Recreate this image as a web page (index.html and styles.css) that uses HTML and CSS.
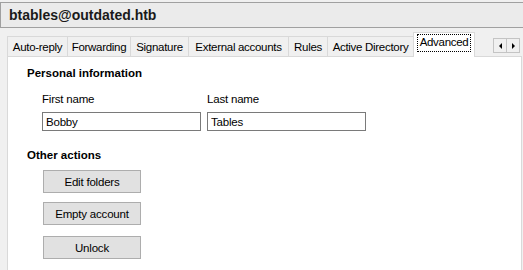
FILE: index.html
```html
<!DOCTYPE html>
<html lang="en">
<head>
  <meta charset="UTF-8" />
  <title>btables@outdated.htb</title>
  <link rel="stylesheet" href="styles.css">
</head>
<body>

  <div class="titlebar">
    <span class="account">btables@outdated.htb</span>
  </div>

  <div class="tabstrip">
    <div class="tab tab-autoreply">Auto-reply</div>
    <div class="tab tab-forwarding">Forwarding</div>
    <div class="tab tab-signature">Signature</div>
    <div class="tab tab-external">External accounts</div>
    <div class="tab tab-rules">Rules</div>
    <div class="tab tab-ad">Active Directory</div>
    <div class="tab tab-advanced active"><span class="focus">Advanced</span></div>
    <div class="tab-scroll">
      <button class="scroll-btn"><span class="arrow left"></span></button>
      <button class="scroll-btn"><span class="arrow right"></span></button>
    </div>
  </div>

  <div class="panel">
    <h2>Personal information</h2>
    <div class="fields">
      <div class="field">
        <label>First name</label>
        <input type="text" value="Bobby">
      </div>
      <div class="field">
        <label>Last name</label>
        <input type="text" value="Tables">
      </div>
    </div>

    <h2 class="other">Other actions</h2>
    <div class="actions">
      <button class="btn">Edit folders</button>
      <button class="btn">Empty account</button>
      <button class="btn btn-last">Unlock</button>
    </div>
  </div>

</body>
</html>
```

FILE: styles.css
```css
* {
  margin: 0; padding: 0; box-sizing: border-box;
  font-family: 'Liberation Sans', Arial, sans-serif;
}
body {
  background: #f0f0f0;
  color: #000;
  width: 523px;
  height: 270px;
  overflow: hidden;
}
.titlebar {
  margin-top: 2px;
  height: 26px;
  background: #ebebeb;
  border-top: 1px solid #a0a0a0;
  border-bottom: 1px solid #a0a0a0;
  border-left: 1px solid #a0a0a0;
  padding-left: 8px;
  display: flex;
  align-items: center;
}
.account {
  font-size: 14px;
  font-weight: bold;
  color: #1a1a1a;
}
.tabstrip {
  display: flex;
  align-items: flex-end;
  height: 28px;
  padding-left: 7px;
}
.tab {
  height: 20px;
  border: 1px solid #d9d9d9;
  border-bottom: none;
  margin-right: -1px;
  background: #f0f0f0;
  font-size: 11.5px;
  letter-spacing: -0.3px;
  display: flex;
  align-items: center;
  justify-content: center;
  white-space: nowrap;
}
.tab-autoreply { width: 61px; }
.tab-forwarding { width: 64px; }
.tab-signature { width: 59px; }
.tab-external { width: 101px; }
.tab-rules { width: 40px; }
.tab-ad { width: 87px; }
.tab-advanced { width: 62px; }
.tab.active {
  height: 25px;
  background: #fff;
  margin-bottom: -1px;
  position: relative;
  z-index: 1;
  padding-bottom: 4px;
}
.focus {
  border: 1px dotted #000;
  padding: 1px 2px 2px;
  line-height: 13px;
}
.tab-scroll {
  display: flex;
  margin-left: auto;
  margin-right: 3px;
  align-self: flex-start;
  margin-top: 10px;
}
.scroll-btn {
  width: 14px;
  height: 15px;
  border: 1px solid #c4c4c4;
  background: #f0f0f0;
  display: flex;
  align-items: center;
  justify-content: center;
  margin-left: -1px;
}
.arrow {
  width: 0; height: 0;
  border-top: 3px solid transparent;
  border-bottom: 3px solid transparent;
}
.arrow.left { border-right: 3px solid #000; }
.arrow.right { border-left: 3px solid #000; }
.panel {
  background: #fff;
  margin-left: 7px;
  margin-right: 1px;
  height: 214px;
  border: 1px solid #d9d9d9;
  border-bottom: none;
  padding: 9px 0 0 19px;
}
h2 {
  font-size: 11.5px;
  font-weight: bold;
  line-height: 14px;
}
.fields {
  display: flex;
  gap: 6px;
  margin: 12px 0 0 15px;
}
.field {
  display: flex;
  flex-direction: column;
  gap: 6px;
}
label {
  font-size: 11.5px;
  letter-spacing: -0.2px;
  line-height: 14px;
}
input {
  width: 159px;
  height: 19px;
  border: 1px solid #7a7a7a;
  padding: 0 3px;
  font-size: 11.5px;
  letter-spacing: -0.2px;
  color: #000;
  outline: none;
}
.other {
  margin-top: 17px;
}
.actions {
  display: flex;
  flex-direction: column;
  align-items: flex-start;
  gap: 9px;
  margin: 8px 0 0 16px;
}
.btn {
  width: 98px;
  height: 23px;
  background: #e1e1e1;
  border: 1px solid #adadad;
  font-size: 11.5px;
  letter-spacing: -0.2px;
  color: #000;
}
.btn-last {
  margin-top: 2px;
}
```
